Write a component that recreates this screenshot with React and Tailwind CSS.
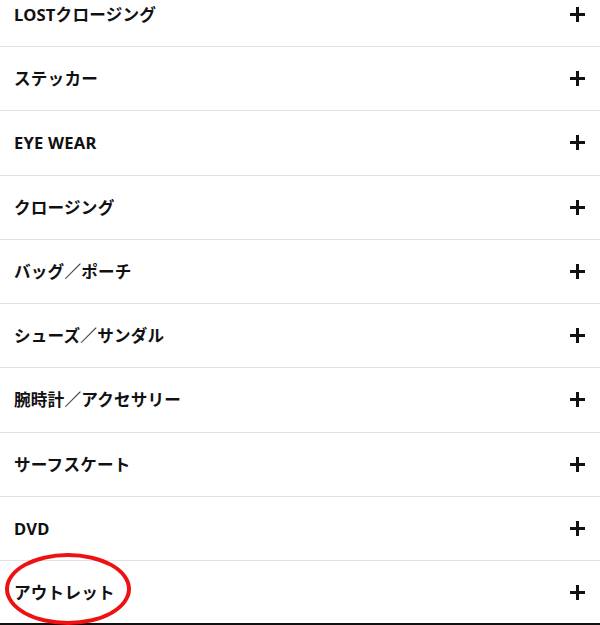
import React from 'react';

const items = [
  'LOSTクロージング',
  'ステッカー',
  'EYE WEAR',
  'クロージング',
  'バッグ／ポーチ',
  'シューズ／サンダル',
  '腕時計／アクセサリー',
  'サーフスケート',
  'DVD',
  'アウトレット',
];

const Plus = () => (
  <svg className="w-[15px] h-[15px]" viewBox="0 0 15 15" fill="#111">
    <rect x="6" y="0" width="3" height="15" />
    <rect x="0" y="6" width="15" height="3" />
  </svg>
);

export default function App() {
  return (
    <div
      className="w-[600px] h-[625px] overflow-hidden bg-white relative"
      style={{ fontFamily: '"Noto Sans", "Noto Sans CJK JP", sans-serif' }}
    >
      <ul className="mt-[-17.25px]">
        {items.map((label, i) => (
          <li
            key={label}
            className={
              'h-[64.25px] flex items-center justify-between pl-[14px] pr-[15px] border-b ' +
              (i === items.length - 1 ? 'border-b-[2px] border-[#111]' : 'border-[#e2e2e2]')
            }
          >
            <span className="relative pt-[2px] text-[16.6px] font-bold text-[#111] tracking-[0.2px]">
              {label}
              {i === items.length - 1 && (
                <span className="absolute left-[-9px] top-[-26px] w-[126px] h-[72px] rounded-[50%] border-[4px] border-[#ee1111]" />
              )}
            </span>
            <Plus />
          </li>
        ))}
      </ul>
    </div>
  );
}
